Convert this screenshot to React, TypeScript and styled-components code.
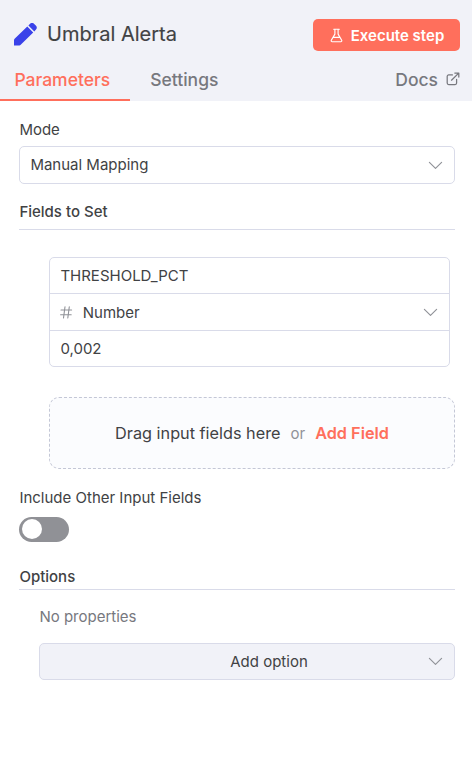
import React from "react";
import styled, { createGlobalStyle } from "styled-components";

const GlobalStyle = createGlobalStyle`
  *, *::before, *::after { box-sizing: border-box; }
  body { margin: 0; background: #fff; }
  button, input { font: inherit; }
`;

const Panel = styled.main`
  width: 472px;
  height: 783px;
  background: #fff;
  color: #414244;
  font-family: Inter, "Liberation Sans", sans-serif;
  font-size: 15px;
  line-height: 20px;
`;

const Header = styled.header`
  height: 101px;
  background: #f1f2f8;
`;

const TitleRow = styled.div`
  display: flex;
  align-items: center;
  height: 60px;
  padding: 8px 12px 0 14px;
`;

const Title = styled.h1`
  flex: 1;
  margin: 0 0 0 10px;
  font-size: 20px;
  font-weight: 400;
  line-height: 26px;
  -webkit-text-stroke: 0.15px;
`;

const ExecuteButton = styled.button`
  display: flex;
  align-items: center;
  justify-content: center;
  gap: 7px;
  width: 147px;
  height: 32px;
  margin-top: 2px;
  padding: 1px 0 0;
  border: 0;
  border-radius: 5px;
  background: #ff6f5c;
  color: #fff;
  font-size: 15px;
  font-weight: 600;
`;

const Tabs = styled.nav`
  display: flex;
  height: 41px;
`;

const Tab = styled.a<{ $active?: boolean }>`
  height: 41px;
  padding: 9px 20px 0 ${(p) => (p.$active ? 14.4 : 20)}px;
  border-bottom: 2px solid ${(p) => (p.$active ? "#ff6f5c" : "transparent")};
  color: ${(p) => (p.$active ? "#ff6f5c" : "#77787e")};
  font-size: 17.5px;
  font-weight: 500;
  line-height: 22px;
`;

const DocsLink = styled.a`
  display: flex;
  gap: 8px;
  margin-left: auto;
  padding: 9px 12px 0 0;
  color: #77787e;
  font-size: 17.5px;
  font-weight: 450;
  line-height: 22px;
  & > svg { margin-top: 3px; }
`;

const Body = styled.div`
  display: flex;
  flex-direction: column;
  padding: 19px 17px 0 19px;
`;

const Label = styled.label`
  height: 20px;
  padding-left: 0.4px;
`;

const Select = styled.div`
  display: flex;
  align-items: center;
  justify-content: space-between;
  height: 38px;
  margin-top: 6px;
  padding: 0 11px 0 10.4px;
  border: 1px solid #d9dbe9;
  border-radius: 5px;
`;

const SectionTitle = styled.h2<{ $top: number; $gap: number }>`
  margin: ${(p) => p.$top}px 0 0;
  padding: 0 0 ${(p) => p.$gap}px 0.4px;
  border-bottom: 1px solid #d9dbe9;
  font-size: 15px;
  font-weight: 500;
  line-height: 20px;
`;

const Assignment = styled.div`
  margin: 27px 5px 0 30px;
  border: 1px solid #d9dbe9;
  border-radius: 5px;
`;

const AssignmentRow = styled.div<{ $height: number }>`
  display: flex;
  align-items: center;
  height: ${(p) => p.$height}px;
  padding: 0 11px 0 10.4px;
  & + & { border-top: 1px solid #d9dbe9; }
  & > svg:last-child { margin-left: auto; }
`;

const TypeName = styled.span`
  margin-left: 9.4px;
  padding-top: 2px;
`;

const DropArea = styled.div`
  display: flex;
  align-items: center;
  justify-content: center;
  height: 72px;
  margin: 30px 0 0 30px;
  border: 1px dashed #c4c7d6;
  border-radius: 10px;
  background: #fbfcfe;
  font-size: 16.25px;
`;

const Or = styled.span`
  margin: 0 10px;
  padding-top: 2px;
  color: #909298;
  font-size: 15px;
`;

const AddField = styled.span`
  color: #ff6f5c;
  font-weight: 600;
`;

const ToggleField = styled.div`
  display: flex;
  flex-direction: column;
  margin-top: 19px;
`;

const Switch = styled.button`
  display: flex;
  align-items: center;
  width: 50px;
  height: 25px;
  margin-top: 9px;
  padding: 0 3px;
  border: 0;
  border-radius: 13px;
  background: #909196;
`;

const Knob = styled.span`
  width: 20px;
  height: 20px;
  margin-top: -1px;
  border-radius: 50%;
  background: #fff;
`;

const Options = styled.div`
  display: flex;
  flex-direction: column;
  padding: 17px 0 0 20px;
`;

const Empty = styled.p`
  margin: 0;
  padding-left: 0.4px;
  color: #77787e;
`;

const AddOption = styled.button`
  display: flex;
  align-items: center;
  height: 37px;
  margin-top: 16px;
  padding: 0 11px 0 70px;
  border: 1px solid #d9dbe9;
  border-radius: 5px;
  background: #f1f2f8;
  color: #414244;
  & > span { flex: 1; text-align: center; }
`;

const Chevron = () => (
  <svg width="15" height="15" viewBox="0 0 15 15" fill="none" stroke="#909298" strokeWidth="1.15" strokeLinecap="round" strokeLinejoin="round">
    <path d="M1.4 4.3 7.5 10.4l6.1-6.1" />
  </svg>
);

const Pencil = () => (
  <svg width="23" height="23" viewBox="0 0 23 23" fill="#3a42e9">
    <path d="M0 22.5v-5.3c0-.6.2-1 .6-1.4L13.3 3.5l5.9 5.9L6.7 21.8c-.4.4-.8.6-1.4.7Z" />
    <path d="m14.4 2.5 1.5-1.5a3 3 0 0 1 4.3 0l1.6 1.6a3 3 0 0 1 0 4.2l-1.5 1.6Z" />
  </svg>
);

const Flask = () => (
  <svg width="15" height="15" viewBox="0 0 15 15" fill="none" stroke="currentColor" strokeWidth="1.15" strokeLinecap="round" strokeLinejoin="round">
    <path d="M5.9 1.2v4.9L2.3 12.2a1 1 0 0 0 .9 1.5h8.6a1 1 0 0 0 .9-1.5L9.1 6.1V1.2M4.7 1.2h5.6M4.1 9.4h6.8" />
  </svg>
);

const External = () => (
  <svg width="14" height="14" viewBox="0 0 14 14" fill="none" stroke="currentColor" strokeWidth="1.25" strokeLinecap="round" strokeLinejoin="round">
    <path d="M6.4 2.9H2.7A1.5 1.5 0 0 0 1.2 4.4v6.7a1.5 1.5 0 0 0 1.5 1.5h6.4a1.5 1.5 0 0 0 1.5-1.5V7.4M8.8 1h4v4M12.7 1.1 5.5 8.2" />
  </svg>
);

const Hash = () => (
  <svg width="13" height="13" viewBox="0 0 13 13" fill="none" stroke="#909298" strokeWidth="1.1" strokeLinecap="round">
    <path d="M1 4h10.6M.6 8.8h10.6M5 .7 3.5 12M9.3.7 7.8 12" />
  </svg>
);

export default function App() {
  return (
    <>
      <GlobalStyle />
      <Panel>
        <Header>
          <TitleRow>
            <Pencil />
            <Title>Umbral Alerta</Title>
            <ExecuteButton><Flask />Execute step</ExecuteButton>
          </TitleRow>
          <Tabs>
            <Tab $active>Parameters</Tab>
            <Tab>Settings</Tab>
            <DocsLink>Docs <External /></DocsLink>
          </Tabs>
        </Header>
        <Body>
          <Label>Mode</Label>
          <Select>Manual Mapping<Chevron /></Select>
          <SectionTitle $top={18} $gap={7}>Fields to Set</SectionTitle>
          <Assignment>
            <AssignmentRow $height={35}>THRESHOLD_PCT</AssignmentRow>
            <AssignmentRow $height={37}><Hash /><TypeName>Number</TypeName><Chevron /></AssignmentRow>
            <AssignmentRow $height={36}>0,002</AssignmentRow>
          </Assignment>
          <DropArea>Drag input fields here<Or>or</Or><AddField>Add Field</AddField></DropArea>
          <ToggleField>
            <Label>Include Other Input Fields</Label>
            <Switch role="switch" aria-checked={false} aria-label="Include Other Input Fields"><Knob /></Switch>
          </ToggleField>
          <SectionTitle $top={25} $gap={2}>Options</SectionTitle>
          <Options>
            <Empty>No properties</Empty>
            <AddOption><span>Add option</span><Chevron /></AddOption>
          </Options>
        </Body>
      </Panel>
    </>
  );
}
